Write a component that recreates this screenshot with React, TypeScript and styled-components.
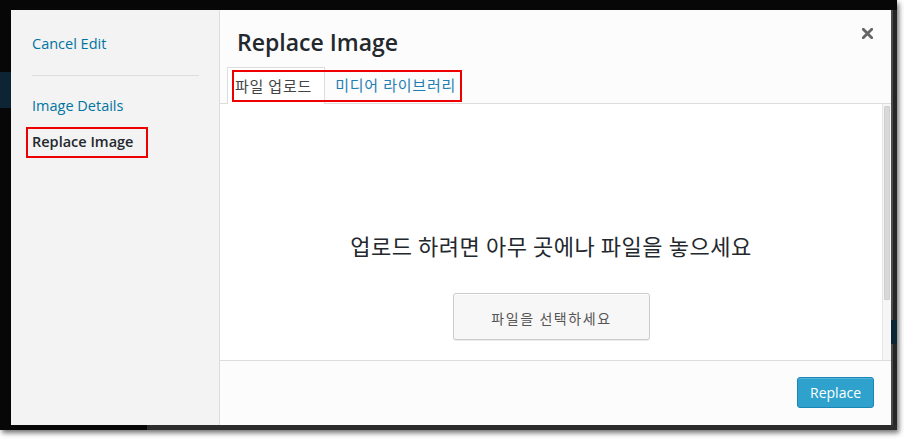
import React from "react";
import styled, { createGlobalStyle } from "styled-components";

const Global = createGlobalStyle`
  html, body { margin: 0; padding: 0; background: #ffffff; }
  body {
    width: 904px; height: 439px; overflow: hidden;
    font-family: "Open Sans", "Noto Sans CJK KR", sans-serif;
  }
  * { box-sizing: border-box; }
`;

const Stage = styled.div`
  position: relative;
  width: 904px;
  height: 439px;
`;

const Frame = styled.div`
  width: 897px;
  height: 430px;
  padding: 10px 6px 5px 11px;
  display: flex;
  background:
    linear-gradient(#0c2434, #0c2434) 0 72px / 11px 36px no-repeat,
    linear-gradient(#0c2434, #0c2434) 100% 320px / 6px 24px no-repeat,
    linear-gradient(#2c2c2c, #2c2c2c) 147px 100% / 100% 5px no-repeat,
    linear-gradient(90deg, #4a4a4a 0 2px, #262626 2px) 100% 10px / 6px 100% no-repeat,
    #070707;
  box-shadow: 2px 3px 5px rgba(0, 0, 0, 0.55);
`;

const Modal = styled.div`
  flex: 1;
  display: flex;
  background: #ffffff;
  min-width: 0;
`;

const Sidebar = styled.nav`
  width: 209px;
  flex: none;
  background: #f3f3f3;
  border-right: 1px solid #dddddd;
  padding-top: 17px;
  display: flex;
  flex-direction: column;
`;

const MenuItem = styled.a<{ $active?: boolean; $gap?: number }>`
  display: block;
  padding: 8px 21px;
  margin-top: ${(p) => p.$gap ?? 0}px;
  font-size: 14.5px;
  line-height: 18px;
  color: ${(p) => (p.$active ? "#23282d" : "#0074a2")};
  font-weight: ${(p) => (p.$active ? 600 : 400)};
  text-decoration: none;
  cursor: pointer;
`;

const Separator = styled.div`
  height: 1px;
  background: #dddddd;
  margin: 14px 20px 13px 21px;
`;

const Main = styled.div`
  flex: 1;
  min-width: 0;
  display: flex;
  flex-direction: column;
`;

const Header = styled.header`
  background: #fcfcfc;
`;

const TitleRow = styled.div`
  display: flex;
  justify-content: space-between;
  align-items: flex-start;
  padding: 17px 18px 10px 17px;
`;

const Title = styled.h1`
  margin: 0;
  font-size: 23px;
  line-height: 30px;
  font-weight: 600;
  color: #23282d;
`;

const CloseButton = styled.button`
  margin-top: 1px;
  width: 11px;
  height: 11px;
  padding: 0;
  border: 0;
  background: none;
  display: flex;
  cursor: pointer;
`;

const TabsRow = styled.div`
  display: flex;
  align-items: flex-end;
  padding-left: 7px;
  border-bottom: 1px solid #dddddd;
`;

const Tab = styled.a<{ $active?: boolean }>`
  display: block;
  height: ${(p) => (p.$active ? 37 : 36)}px;
  margin-bottom: ${(p) => (p.$active ? -1 : 0)}px;
  padding: ${(p) => (p.$active ? "0 12px 0 7px" : "0 10px")};
  line-height: ${(p) => (p.$active ? 35 : 36)}px;
  font-family: "Noto Sans CJK KR", sans-serif;
  font-size: 15px;
  letter-spacing: 0.8px;
  color: ${(p) => (p.$active ? "#444444" : "#1f7fb3")};
  background: ${(p) => (p.$active ? "#ffffff" : "transparent")};
  border: ${(p) => (p.$active ? "1px solid #dddddd" : "0")};
  border-bottom: 0;
  text-decoration: none;
  white-space: nowrap;
  cursor: pointer;
`;

const Content = styled.div`
  flex: 1;
  display: flex;
  min-height: 0;
  background: #ffffff;
`;

const Uploader = styled.div`
  flex: 1;
  display: flex;
  flex-direction: column;
  align-items: center;
  padding-top: 127px;
`;

const DropText = styled.p`
  margin: 0;
  font-family: "Noto Sans CJK KR", sans-serif;
  font-size: 22px;
  line-height: 29px;
  letter-spacing: 0.55px;
  color: #23282d;
  white-space: nowrap;
`;

const SelectButton = styled.button`
  margin-top: 33px;
  width: 197px;
  height: 47px;
  padding: 3px 0 0 1px;
  border: 1px solid #cccccc;
  border-radius: 3px;
  background: #f7f7f7;
  box-shadow: inset 0 1px 0 #ffffff, 0 1px 0 rgba(0, 0, 0, 0.08);
  font-family: "Noto Sans CJK KR", sans-serif;
  font-size: 14px;
  letter-spacing: 1.6px;
  color: #555555;
  cursor: pointer;
`;

const ScrollTrack = styled.div`
  width: 9px;
  flex: none;
  background: #f6f6f6;
  border-left: 1px solid #e6e6e6;
  padding: 2px 1px 0 1px;
`;

const ScrollThumb = styled.div`
  height: 194px;
  background: #d9d9d9;
  border: 1px solid #cfcfcf;
  border-radius: 1px;
`;

const Toolbar = styled.footer`
  height: 65px;
  flex: none;
  border-top: 1px solid #dddddd;
  background: #fcfcfc;
  display: flex;
  justify-content: flex-end;
  align-items: center;
  padding: 0 17px 1px 0;
`;

const PrimaryButton = styled.button`
  height: 31px;
  padding: 0 12px;
  border: 1px solid #1a86b8;
  border-radius: 3px;
  background: #2ea2cc;
  box-shadow: inset 0 1px 0 rgba(120, 200, 230, 0.5);
  color: #ffffff;
  font-family: "Open Sans", sans-serif;
  font-size: 14px;
  cursor: pointer;
`;

const Annotation = styled.div<{ $x: number; $y: number; $w: number; $h: number }>`
  position: absolute;
  left: ${(p) => p.$x}px;
  top: ${(p) => p.$y}px;
  width: ${(p) => p.$w}px;
  height: ${(p) => p.$h}px;
  border: 2px solid #ee0000;
  pointer-events: none;
`;

export default function App() {
  return (
    <>
      <Global />
      <Stage>
        <Frame>
          <Modal>
            <Sidebar>
              <MenuItem>Cancel Edit</MenuItem>
              <Separator />
              <MenuItem>Image Details</MenuItem>
              <MenuItem $active $gap={2}>
                Replace Image
              </MenuItem>
            </Sidebar>
            <Main>
              <Header>
                <TitleRow>
                  <Title>Replace Image</Title>
                  <CloseButton aria-label="Close">
                    <svg width="11" height="11" viewBox="0 0 11 11">
                      <path
                        d="M1.3 1.3 L9.7 9.7 M9.7 1.3 L1.3 9.7"
                        stroke="#666666"
                        strokeWidth="2.8"
                        strokeLinecap="square"
                        fill="none"
                      />
                    </svg>
                  </CloseButton>
                </TitleRow>
                <TabsRow>
                  <Tab $active>파일 업로드</Tab>
                  <Tab>미디어 라이브러리</Tab>
                </TabsRow>
              </Header>
              <Content>
                <Uploader>
                  <DropText>업로드 하려면 아무 곳에나 파일을 놓으세요</DropText>
                  <SelectButton>파일을 선택하세요</SelectButton>
                </Uploader>
                <ScrollTrack>
                  <ScrollThumb />
                </ScrollTrack>
              </Content>
              <Toolbar>
                <PrimaryButton>Replace</PrimaryButton>
              </Toolbar>
            </Main>
          </Modal>
        </Frame>
        <Annotation $x={232} $y={70} $w={230} $h={32} />
        <Annotation $x={26} $y={127} $w={122} $h={31} />
      </Stage>
    </>
  );
}
